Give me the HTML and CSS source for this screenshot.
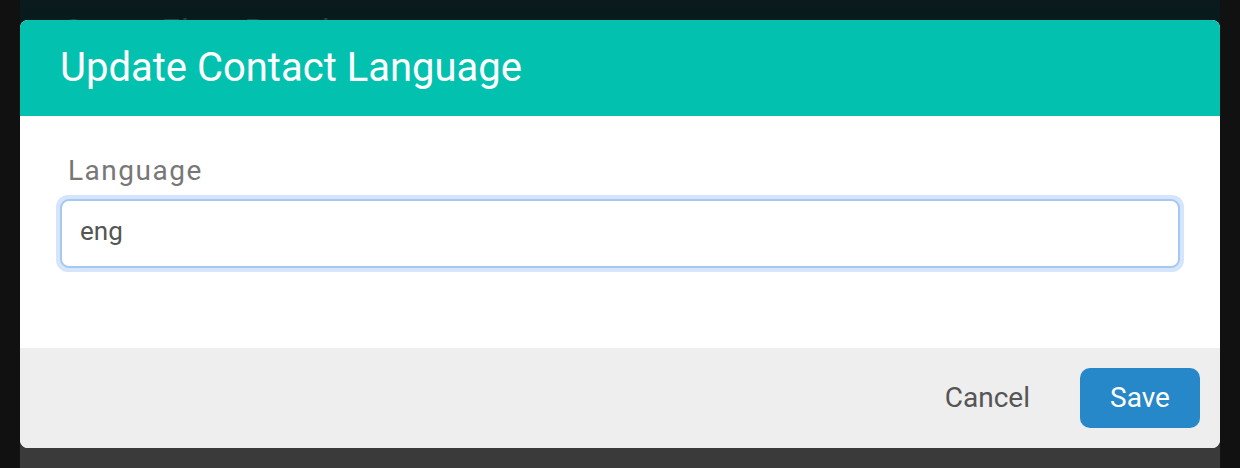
FILE: index.html
```html
<!DOCTYPE html>
<html>
<head>
<meta charset="utf-8">
<link rel="stylesheet" href="styles.css">
</head>
<body>
<div class="page">
  <div class="page-head"><h1 class="page-title">Some Flow Results</h1></div>
  <div class="page-body"></div>
  <div class="dialog">
    <div class="dialog-header">Update Contact Language</div>
    <div class="dialog-body">
      <label class="field-label">Language</label>
      <div class="input-ring"><div class="input">eng</div></div>
    </div>
    <div class="dialog-footer">
      <button class="btn btn-cancel">Cancel</button>
      <button class="btn btn-save">Save</button>
    </div>
  </div>
</div>
</body>
</html>
```
FILE: styles.css
```css
* { box-sizing: border-box; }
html, body { margin: 0; padding: 0; }
body {
  background: #111111;
  font-family: Roboto, "Liberation Sans", sans-serif;
  width: 1240px;
  height: 468px;
  overflow: hidden;
}
.page {
  position: relative;
  margin: 0 20px;
  width: 1200px;
  height: 468px;
  display: flex;
  flex-direction: column;
  background: #3a3a3a;
}
.page-head {
  height: 60px;
  background: linear-gradient(#0a1a1d, #061b1d);
  padding: 11px 0 0 43px;
  overflow: hidden;
}
.page-title {
  margin: 0;
  font-weight: 400;
  font-size: 34px;
  line-height: 40px;
  color: #343b3c;
  letter-spacing: 0.5px;
}
.page-body { flex: 1; }
.dialog {
  position: absolute;
  left: 0;
  top: 20px;
  width: 1200px;
  height: 428px;
  border-radius: 8px;
  overflow: hidden;
  display: flex;
  flex-direction: column;
  background: #fff;
}
.dialog-header {
  height: 96px;
  background: #03c1af;
  color: #fff;
  font-size: 40px;
  line-height: 96px;
  padding-left: 40px;
}
.dialog-body {
  height: 232px;
  padding: 38px 36px 0 36px;
  display: flex;
  flex-direction: column;
}
.field-label {
  font-size: 28px;
  line-height: 34px;
  color: #777;
  letter-spacing: 1.5px;
  padding-left: 12px;
  margin-bottom: 7px;
}
.input-ring {
  padding: 4px;
  border-radius: 12px;
  background: #d5e5fc;
}
.input {
  height: 69px;
  border: 2px solid #a4c7f4;
  border-radius: 9px;
  background: #fff;
  font-size: 26px;
  line-height: 61px;
  color: #555;
  padding-left: 18px;
}
.dialog-footer {
  flex: 1;
  background: #eeeeee;
  display: flex;
  justify-content: flex-end;
  align-items: center;
  gap: 34px;
  padding-right: 20px;
}
.btn {
  border: none;
  font-family: Roboto, "Liberation Sans", sans-serif;
  font-size: 28px;
  cursor: pointer;
  padding-bottom: 2px;
}
.btn-cancel {
  background: transparent;
  color: #555;
  padding-left: 16px;
  padding-right: 16px;
}
.btn-save {
  background: #2688c9;
  color: #fff;
  width: 120px;
  height: 60px;
  border-radius: 10px;
}
```
